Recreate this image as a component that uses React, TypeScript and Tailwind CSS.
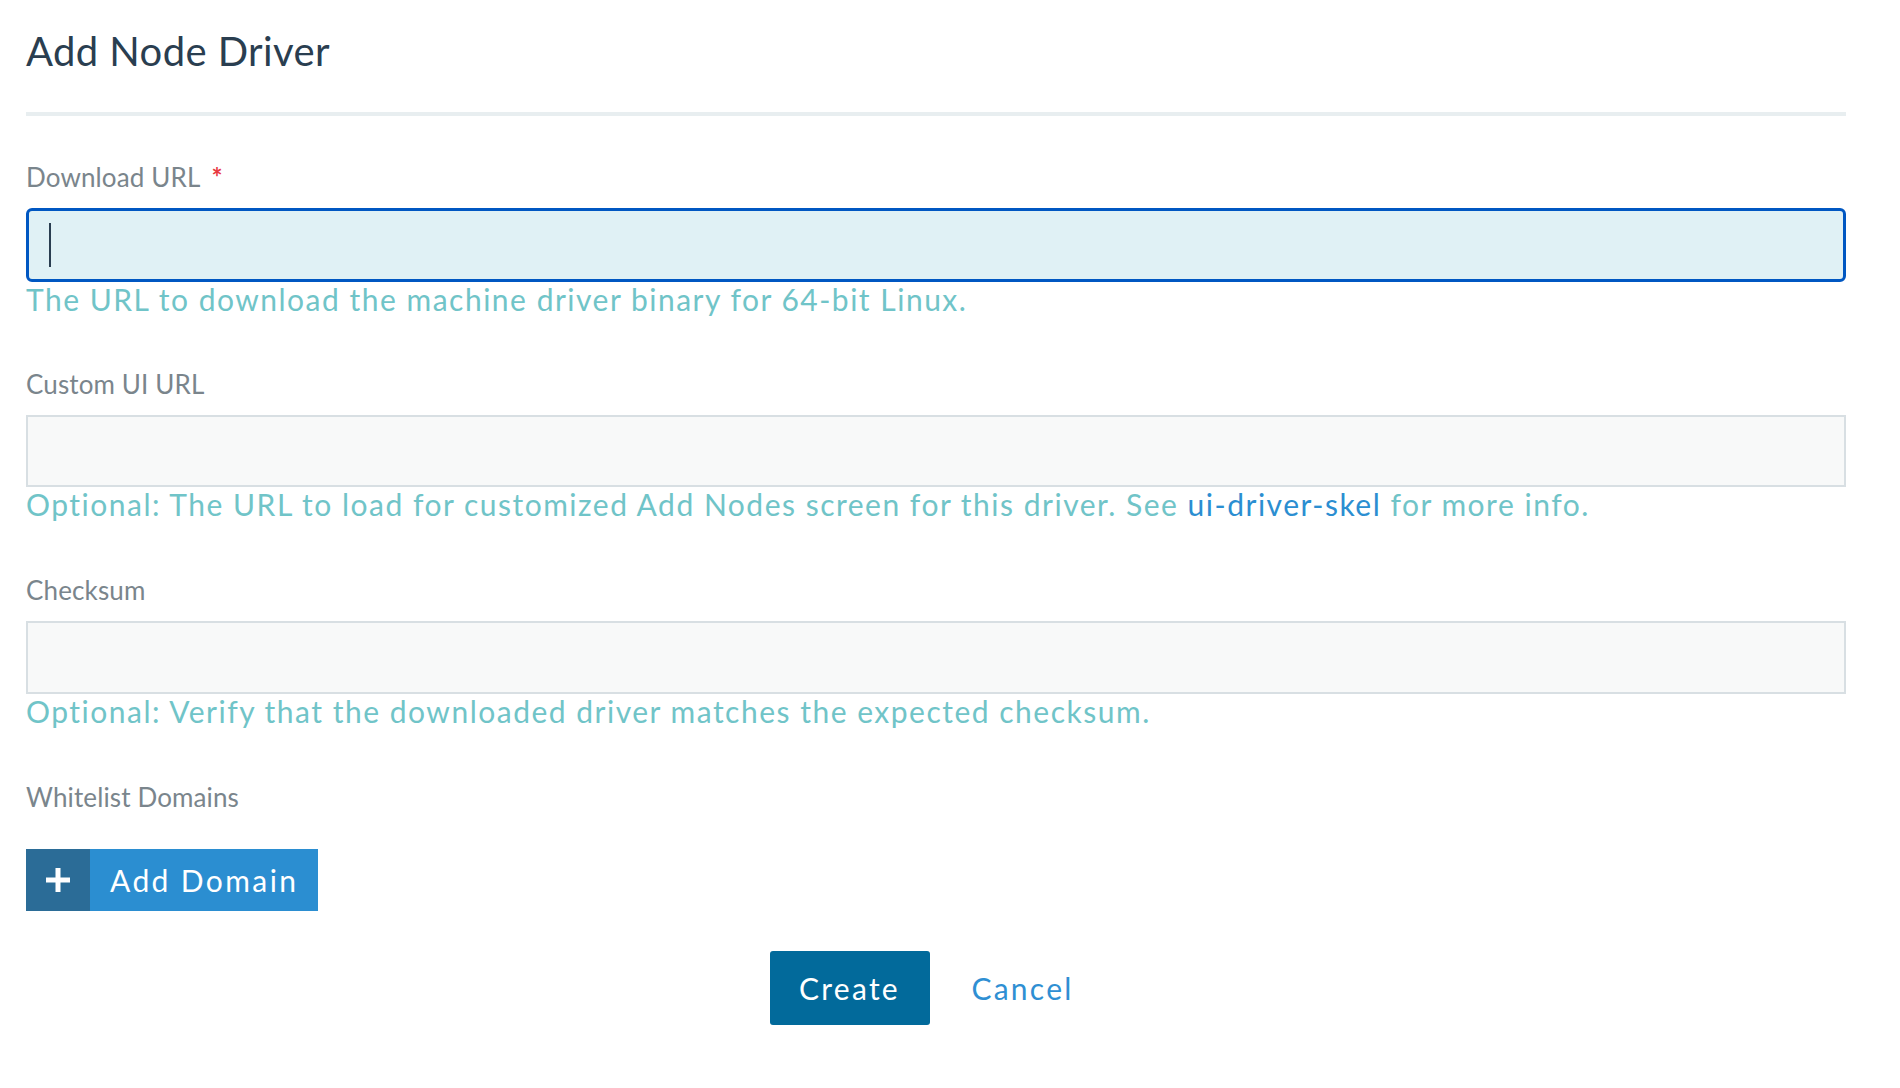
import React from "react";

const font = { fontFamily: "Lato, 'Open Sans', sans-serif" };

function Label({ children, required }: { children: React.ReactNode; required?: boolean }) {
  return (
    <div className="text-[26px] leading-[30px] tracking-[0.005em] text-[#7a858c]">
      {children}
      {required && <span className="ml-[11px] text-[#e8383f] font-bold">*</span>}
    </div>
  );
}

function Help({ children }: { children: React.ReactNode }) {
  return <div className="text-[30px] leading-[35px] tracking-[0.05em] text-[#70c4c8]">{children}</div>;
}

export default function App() {
  return (
    <div className="min-h-[1088px] w-[1900px] bg-white pl-[26px] pr-[54px]" style={font}>
      <h1 className="pt-[28px] text-[40px] leading-[46px] tracking-[0.01em] text-[#2a3e50] font-normal">Add Node Driver</h1>
      <div className="mt-[38px] h-[4px] bg-[#e8eef0]" />

      <div className="mt-[46px]">
        <Label required>Download URL</Label>
        <div className="mt-[16px] flex h-[74px] items-center rounded-[6px] border-[3px] border-[#0057c2] bg-[#e0f1f5] pl-[20px]">
          <span className="h-[44px] w-[2px] bg-[#2a3e50]" />
        </div>
        <Help>The URL to download the machine driver binary for 64-bit Linux.</Help>
      </div>

      <div className="mt-[52px]">
        <Label>Custom UI URL</Label>
        <div className="mt-[16px] h-[72px] border-2 border-[#d8dfe3] bg-[#f8f9f9]" />
        <Help>
          Optional: The URL to load for customized Add Nodes screen for this driver. See{" "}
          <span className="text-[#2b8ed1]">ui-driver-skel</span> for more info.
        </Help>
      </div>

      <div className="mt-[53px]">
        <Label>Checksum</Label>
        <div className="mt-[16px] h-[73px] border-2 border-[#d8dfe3] bg-[#f8f9f9]" />
        <Help>Optional: Verify that the downloaded driver matches the expected checksum.</Help>
      </div>

      <div className="mt-[53px]">
        <Label>Whitelist Domains</Label>
        <div className="mt-[37px] flex h-[62px] w-[292px]">
          <div className="flex w-[64px] items-center justify-center bg-[#2b6c97]">
            <svg width="24" height="24" viewBox="0 0 24 24">
              <rect x="0" y="9.5" width="24" height="5" fill="white" />
              <rect x="9.5" y="0" width="5" height="24" fill="white" />
            </svg>
          </div>
          <div className="flex flex-1 items-center bg-[#2b8ed1] pl-[20px] text-[30px] tracking-[0.08em] text-white">Add Domain</div>
        </div>
      </div>

      <div className="mt-[40px] flex justify-center gap-[13px]">
        <button className="h-[74px] w-[160px] rounded-[3px] bg-[#026a9b] text-[30px] tracking-[0.075em] text-white">Create</button>
        <button className="h-[74px] w-[160px] text-[30px] tracking-[0.075em] text-[#2f8fd3]">Cancel</button>
      </div>
    </div>
  );
}
